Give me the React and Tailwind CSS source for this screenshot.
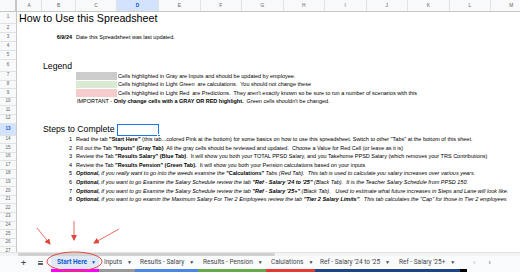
import React from "react";

const F = { fontFamily: '"Liberation Sans", Arial, sans-serif' };

function Row({ n, h, active, children }) {
  return (
    <div className={`flex ${h} shrink-0`}>
      <div
        className={`w-[17px] shrink-0 flex items-center justify-center border-r border-r-[#c4c7c5] border-b border-b-[#e1e3e1] text-[4.5px] ${
          active ? "bg-[#d3e3fd] text-[#0b57d0] font-bold" : "bg-[#f8f9fa] text-[#5f6368]"
        }`}
      >
        {n}
      </div>
      <div className="flex-1 flex items-center whitespace-pre overflow-visible text-black text-[5.5px] leading-none">
        {children}
      </div>
    </div>
  );
}

function Step({ n, children }) {
  return (
    <>
      <div className="w-[57px] shrink-0 text-right pr-[2px]">{n}</div>
      <div className="pl-[2px]">{children}</div>
    </>
  );
}

function LegendRow({ color, children }) {
  return (
    <>
      <div className="w-[59px] shrink-0" />
      <div className={`w-[41px] shrink-0 h-full border-b border-white ${color}`} />
      <div className="pl-[1px]">{children}</div>
    </>
  );
}

const cols = [
  ["A", "w-[25px]"],
  ["B", "w-[34px]"],
  ["C", "w-[41px]"],
  ["D", "w-[42px]"],
  ["E", "w-[41.5px]"],
  ["F", "w-[41.5px]"],
  ["G", "w-[41.5px]"],
  ["H", "w-[41.5px]"],
  ["I", "w-[41.5px]"],
  ["J", "w-[41.5px]"],
  ["K", "w-[41.5px]"],
  ["L", "w-[41.5px]"],
  ["M", "w-[41.5px]"],
];

const tabs = [
  { label: "Inputs", w: "w-[36px]", bar: "bg-[#999999]" },
  { label: "Results - Salary", w: "w-[63px]", bar: "bg-[#4a86e8]" },
  { label: "Results - Pension", w: "w-[68px]", bar: "bg-[#6aa84f]" },
  { label: "Calulations", w: "w-[49px]", bar: "bg-[#e53935]" },
  { label: "Ref - Salary '24 to '25", w: "w-[79px]", bar: "bg-[#1c4587]" },
  { label: "Ref - Salary '25+", w: "w-[66px]", bar: "bg-[#1c4587]" },
];

export default function App() {
  return (
    <div className="relative w-[520px] h-[272px] bg-white overflow-hidden flex flex-col" style={F}>
      {/* grid */}
      <div className="flex-1 flex flex-col overflow-hidden">
        {/* header */}
        <div className="flex h-[12px] shrink-0 bg-[#f8f9fa] border-b border-[#c4c7c5]">
          <div className="w-[17px] shrink-0 border-r-[2px] border-[#c4c7c5]" />
          {cols.map(([c, w]) => (
            <div
              key={c}
              className={`${w} shrink-0 flex items-center justify-center border-r border-[#e1e3e1] text-[4.8px] ${
                c === "D" ? "bg-[#d3e3fd] text-[#0b57d0] font-bold" : "text-[#5f6368]"
              }`}
            >
              {c}
            </div>
          ))}
        </div>

        <Row n="1" h="h-[12px]">
          <div className="pl-[2px] text-[10.7px] leading-none">How to Use this Spreadsheet</div>
        </Row>
        <Row n="2" h="h-[9px]" />
        <Row n="3" h="h-[9px]">
          <div className="w-[57px] shrink-0 text-right pr-[2px] font-bold">6/9/24</div>
          <div className="pl-[2px]">Date this Spreadsheet was last updated.</div>
        </Row>
        <Row n="4" h="h-[9px]" />
        <Row n="5" h="h-[9px]" />
        <Row n="6" h="h-[12px]">
          <div className="pl-[26px] text-[8.7px] leading-none">Legend</div>
        </Row>
        <Row n="7" h="h-[8.6px]">
          <LegendRow color="bg-[#cccccc]">Cells highlighted in Gray are Inputs and should be updated by employee.</LegendRow>
        </Row>
        <Row n="8" h="h-[8.6px]">
          <LegendRow color="bg-[#d9ead3]">Cells highlighted in Light Green  are calculations.  You should not change these</LegendRow>
        </Row>
        <Row n="9" h="h-[8.6px]">
          <LegendRow color="bg-[#f4cccc]">
            Cells highlighted in Light Red  are Predictions.  They aren't exactly known so be sure to run a number of scenarios with this
          </LegendRow>
        </Row>
        <Row n="10" h="h-[8.6px]">
          <div className="w-[59px] shrink-0" />
          <div className="pl-[1px]">
            IMPORTANT - <b>Only change cells with a GRAY OR RED highlight.</b>  Green cells shouldn't be changed.
          </div>
        </Row>
        <Row n="11" h="h-[8.6px]" />
        <Row n="12" h="h-[8.6px]" />
        <Row n="13" h="h-[12px]" active>
          <div className="w-[100px] shrink-0 pl-[26px] text-[8.7px] leading-none">Steps to Complete</div>
          <div className="relative w-[42px] h-full shrink-0 border-[1.5px] border-[#1a73e8]">
            <div className="absolute -right-[2.5px] -bottom-[2.5px] w-[3.5px] h-[3.5px] bg-[#1a73e8] border border-white" />
          </div>
        </Row>
        <Row n="14" h="h-[8.6px]">
          <Step n="1">
            Read the tab <b>"Start Here"</b> (this tab...colored Pink at the bottom) for some basics on how to use this spreadsheet. Switch to other "Tabs" at the bottom of this sheet.
          </Step>
        </Row>
        <Row n="15" h="h-[8.6px]">
          <Step n="2">
            Fill out the Tab <b>"Inputs" (Gray Tab)</b>  All the gray cells should be reviewed and updated.  Choose a Value for Red Cell (or leave as it is)
          </Step>
        </Row>
        <Row n="16" h="h-[8.6px]">
          <Step n="3">
            Review the Tab <b>"Results Salary" (Blue Tab)</b>.  It will show you both your TOTAL PPSD Salary, and you Takehome PPSD Salary (which removes your TRS Contributions)
          </Step>
        </Row>
        <Row n="17" h="h-[8.6px]">
          <Step n="4">
            Review the Tab <b>"Results Pension" (Green Tab).</b>  It will show you both your Pension calculations based on your inputs
          </Step>
        </Row>
        <Row n="18" h="h-[8.6px]">
          <Step n="5">
            <b><i>Optional,</i></b>
            <i> if you really want to go into the weeds examine the </i>
            <b>"Calculations"</b>
            <i> Tabs (Red Tab).  This tab is used to calculate you salary increases over various years.</i>
          </Step>
        </Row>
        <Row n="19" h="h-[8.6px]">
          <Step n="6">
            <b><i>Optional,</i></b>
            <i> if you want to go Examine the Salary Schedule review the tab </i>
            <b><i>"Ref - Salary '24 to '25"</i></b>
            <i> (Black Tab).  It is the Teacher Salary Schedule from PPSD 150.</i>
          </Step>
        </Row>
        <Row n="20" h="h-[8.6px]">
          <Step n="7">
            <b><i>Optional,</i></b>
            <i> if you want to go Examine the Salary Schedule review the tab </i>
            <b><i>"Ref - Salary '25+"</i></b>
            <i> (Black Tab).   Used to estimate what future increases in Steps and Lane will look like.</i>
          </Step>
        </Row>
        <Row n="21" h="h-[8.6px]">
          <Step n="8">
            <b><i>Optional,</i></b>
            <i> if you want to go examin the Maximum Salary For Tier 2 Employees review the tab </i>
            <b><i>"Tier 2 Salary Limits"</i></b>
            <i>.  This tab calculates the "Cap" for those in Tier 2 employees</i>
          </Step>
        </Row>
        {["22", "23", "24", "25", "26", "27"].map((n) => (
          <Row key={n} n={n} h="h-[8.6px]" />
        ))}
      </div>

      {/* horizontal scrollbar */}
      <div className="h-[4px] shrink-0 bg-[#f1f3f4] border-t border-[#e1e3e1] flex">
        <div className="ml-[18px] w-[257px] h-full bg-[#cfd1d3] rounded-full" />
      </div>

      {/* tab bar */}
      <div className="h-[16px] shrink-0 bg-[#f9fbfd] flex items-stretch text-[6.5px] text-[#444746]" style={{ fontFamily: 'Roboto, "Liberation Sans", sans-serif' }}>
        <div className="w-[51px] shrink-0 flex items-center pb-[2px]">
          <span className="ml-[21px] text-[9px] leading-none text-[#444746]">+</span>
          <span className="ml-[12px] flex flex-col gap-[1px]">
            <span className="block w-[5px] h-[0.8px] bg-[#5f6368]" />
            <span className="block w-[5px] h-[0.8px] bg-[#5f6368]" />
            <span className="block w-[5px] h-[0.8px] bg-[#5f6368]" />
          </span>
        </div>
        <div className="w-[48px] shrink-0 flex flex-col">
          <div className="h-[13px] bg-[#e1e9f7] flex items-center pl-[6px] pt-[1px] gap-[4px] text-[#0b57d0] font-bold whitespace-pre">
            <span>Start Here</span>
            <span className="text-[5px]">▼</span>
          </div>
          <div className="h-[3px] bg-[#ff00ff]" />
        </div>
        {tabs.map((t) => (
          <div key={t.label} className={`${t.w} shrink-0 flex flex-col`}>
            <div className="h-[13px] flex items-center pl-[5px] pt-[1px] gap-[5px] whitespace-pre">
              <span>{t.label}</span>
              <span className="text-[5px]">▼</span>
            </div>
            <div className={`h-[3px] ${t.bar}`} />
          </div>
        ))}
        <div className="w-[7px] shrink-0 flex flex-col">
          <div className="h-[13px]" />
          <div className="h-[3px] bg-black" />
        </div>
        <div className="flex items-center pb-[2px] text-[#5f6368]">
          <span className="ml-[6px] text-[8px] text-[#b0b3b6] leading-none">‹</span>
          <span className="ml-[13px] text-[8px] leading-none">›</span>
        </div>
      </div>

      {/* red annotations */}
      <svg className="absolute inset-0 pointer-events-none" width="520" height="272" viewBox="0 0 520 272">
        <defs>
          <marker id="ah" markerWidth="6" markerHeight="6" refX="5" refY="3" orient="auto" markerUnits="userSpaceOnUse">
            <path d="M0,0 L6,3 L0,6 z" fill="#e0463c" />
          </marker>
        </defs>
        <ellipse cx="74.5" cy="261.5" rx="27.5" ry="9.5" fill="none" stroke="#e0463c" strokeWidth="1" />
        <line x1="37" y1="228" x2="50" y2="244" stroke="#e0463c" strokeWidth="0.8" markerEnd="url(#ah)" />
        <line x1="74" y1="221" x2="74" y2="240" stroke="#e0463c" strokeWidth="0.8" markerEnd="url(#ah)" />
        <line x1="119" y1="229" x2="94" y2="243" stroke="#e0463c" strokeWidth="0.8" markerEnd="url(#ah)" />
      </svg>
    </div>
  );
}
